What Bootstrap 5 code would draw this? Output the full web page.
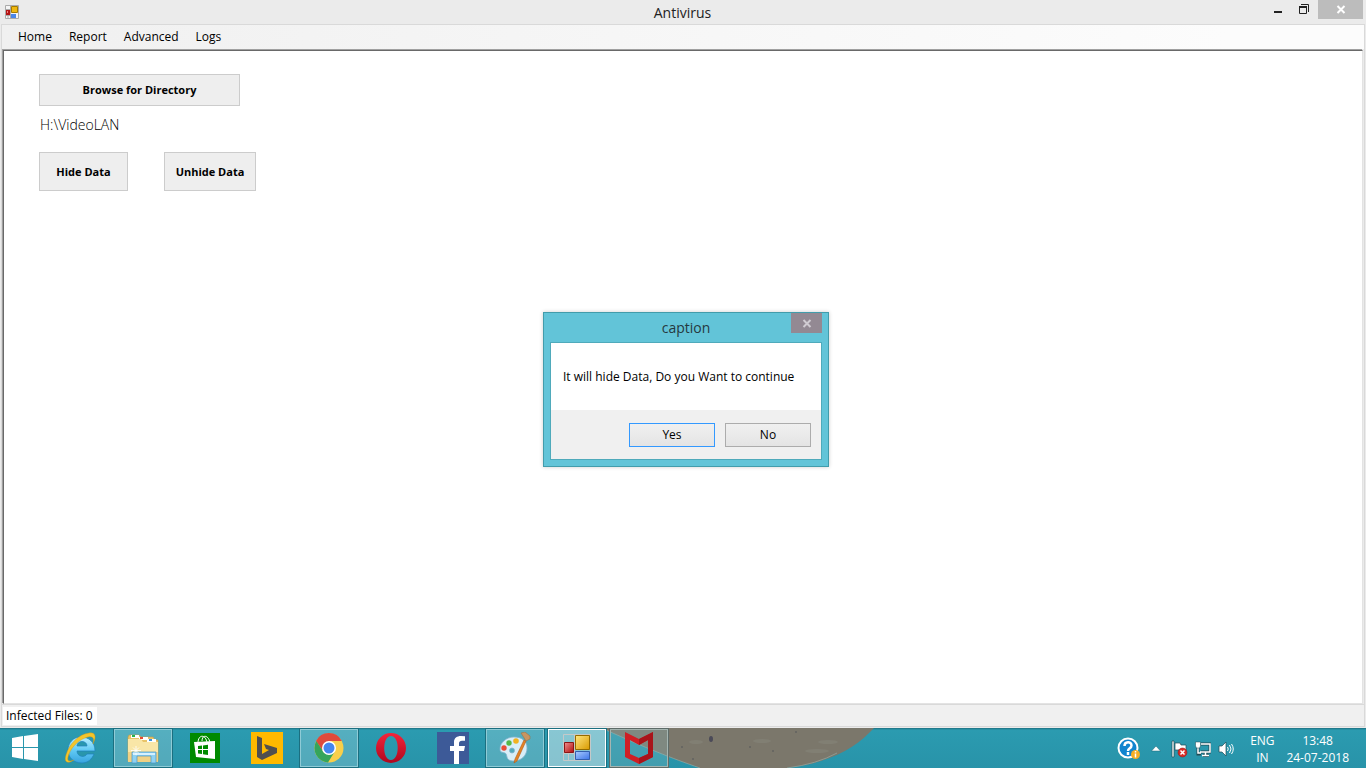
<!DOCTYPE html>
<html lang="en">
<head>
<meta charset="utf-8">
<meta name="viewport" content="width=device-width, initial-scale=1">
<title>Antivirus</title>
<link href="https://cdn.jsdelivr.net/npm/bootstrap@5.3.0/dist/css/bootstrap.min.css" rel="stylesheet">
<style>
  body { font-family: "Open Sans", "Noto Sans", sans-serif; font-size: 12px; line-height: 16px; color: #000; background: #ebebeb; overflow: hidden; }
  svg { display: block; flex: none; }
  button { font-family: inherit; }
  .win-title { height: 24px; color: #222; padding-left: 5px; }
  .win-title h1 { font-size: 14px; line-height: 24px; font-weight: 400; padding-right: 20px; padding-top: 1px; }
  .win-controls { right: 3px; top: 0; }
  .win-btn { width: 27px; height: 19px; border: 0; padding: 0; background: transparent; color: #222; }
  .close-btn { width: 45px; background: #bcbcbc; color: #fff; }
  .frame { border: 1px solid #d9d9d9; margin: 0 1px 1px; }
  .menu-strip { height: 24px; background: linear-gradient(90deg, #f0f0f0, #fcfcfc 90%); padding-left: 7px; }
  .menu-strip .nav-link { color: #000; padding: 4px 8px 4px 9px; line-height: 16px; }
  .client { background: #fff; margin: 1px 1px 0; border: 1px solid #e3e3e3; border-top-color: #696969; border-left-color: #696969; padding: 23px 35px; box-shadow: -1px -1px #a0a0a0; }
  .flat-btn { background: #eee; border: 1px solid #ccc; border-radius: 0; font-size: 11px; font-weight: 700; line-height: 16px; color: #000; padding: 0; }
  .browse-btn { width: 201px; height: 32px; }
  .data-btn { width: 89px; height: 39px; }
  .data-btn.wide { width: 92px; }
  .gap-btns { gap: 36px; }
  .path-line { font-size: 14px; line-height: 18px; font-weight: 300; margin: 10px 0 18px 1px; color: #000; }
  .status-strip { height: 22px; background: #f0f0f0; border-top: 1px solid #d9d9d9; }
  .status-strip output { background: #fff; padding: 0 4px 0 3px; margin: 2px 0 1px 1px; line-height: 18px; }
  .dialog-box { left: 543px; top: 312px; width: 286px; background: #62c4d8; border: 1px solid #429cab; box-shadow: 0 0 4px #0003; padding: 0 6px 6px; }
  .dialog-box h2 { font-size: 14px; line-height: 29px; font-weight: 400; color: #26393f; margin: 0; }
  .dialog-close { right: 6px; top: 0; width: 31px; height: 20px; border: 0; padding: 0; background: #938993; color: #d0cbd2; }
  .dialog-inner { border: 1px solid #4faabb; background: #fff; }
  .dialog-text { padding: 26px 12px 25px; line-height: 16px; margin: 0; white-space: nowrap; }
  .dialog-foot { background: #f0f0f0; padding: 13px 10px 12px; gap: 10px; }
  .dlg-btn { width: 86px; height: 24px; border: 1px solid #acacac; border-radius: 0; background: linear-gradient(#f0f0f0, #e4e4e4); font-size: 12px; line-height: 16px; padding: 0; color: #000; }
  .dlg-btn.default { border-color: #3399ff; }
  .taskbar { height: 40px; background: linear-gradient(#1d6f80, #2b9bb0 2px, #2893a9); }
  .wallpaper { left: 606px; top: 0; }
  .start-btn, .task-btn { border: 0; padding: 0; background: transparent; height: 38px; margin: 1px 0; }
  .start-btn { width: 48px; padding-left: 2px; }
  .task-btn { width: 58px; border: 1px solid transparent; }
  .task-btn.open { background: #ffffff33; border-color: #8fcbd6; outline: 1px solid #1b6f80; }
  .task-btn.active { background: #ffffff70; border-color: #fff; }
  .task-btn.gray { background: #8bbcc044; border-color: #a5b5b1; outline-color: #5d6b68; }
  .tray { color: #fff; font-size: 12px; line-height: 17px; padding-right: 17px; padding-top: 4px; }
  .tray-icons { gap: 7px; margin-right: 15px; padding-bottom: 2px; }
  .tray-lang { width: 26px; margin-right: 11px; }
</style>
</head>
<body class="vh-100 d-flex flex-column">

<header class="win-title position-relative d-flex align-items-center">
  <svg width="14" height="14" viewBox="0 0 14 14"><path fill="#f4f4f4" stroke="#aaa" d="M.5.5h13v13H.5zM.5 4.500h5M.5 10.500h5M3 10v4M5.500 1v12"/><path fill="#b31414" d="M1 5h4v5H1z"/><path fill="#f08080" d="M2 6h1v2H2z"/><path fill="#efb810" stroke="#a57b00" d="M6.500 1.500h6v6h-6z"/><path fill="#4b86e8" d="M6 9h5v4H6z"/></svg>
  <h1 class="flex-grow-1 text-center mb-0">Antivirus</h1>
  <div class="win-controls position-absolute d-flex">
    <button class="win-btn" aria-label="Minimize"><svg width="27" height="19"><path fill="#222" d="M10 11h8v2h-8z"/></svg></button>
    <button class="win-btn" aria-label="Restore"><svg width="27" height="19"><path fill="none" stroke="#222" d="M10 4.500h7.500V12"/><path fill="none" stroke="#222" d="M8.500 6.500h7v7h-7z"/><path fill="#222" d="M8 6h8v2H8z"/></svg></button>
    <button class="win-btn close-btn" aria-label="Close"><svg width="45" height="19"><path stroke="#fff" stroke-width="2" d="M19.500 6l7 7M26.500 6l-7 7"/></svg></button>
  </div>
</header>

<div class="frame flex-grow-1 d-flex flex-column">
  <nav class="menu-strip d-flex">
    <ul class="nav">
      <li class="nav-item"><a class="nav-link" href="#">Home</a></li>
      <li class="nav-item"><a class="nav-link" href="#">Report</a></li>
      <li class="nav-item"><a class="nav-link" href="#">Advanced</a></li>
      <li class="nav-item"><a class="nav-link" href="#">Logs</a></li>
    </ul>
  </nav>
  <main class="client flex-grow-1">
    <button class="btn flat-btn browse-btn d-block">Browse for Directory</button>
    <p class="path-line">H:\VideoLAN</p>
    <div class="d-flex gap-btns">
      <button class="btn flat-btn data-btn">Hide Data</button>
      <button class="btn flat-btn data-btn wide">Unhide Data</button>
    </div>
  </main>
  <footer class="status-strip d-flex"><output>Infected Files: 0</output></footer>
</div>

<section class="dialog-box position-absolute" role="dialog" aria-labelledby="dlgTitle">
  <h2 id="dlgTitle" class="text-center">caption</h2>
  <button class="dialog-close position-absolute" aria-label="Close"><svg width="31" height="20"><path stroke="currentColor" stroke-width="2" d="M12.500 7l7 7M19.500 7l-7 7"/></svg></button>
  <div class="dialog-inner">
    <p class="dialog-text">It will hide Data, Do you Want to continue</p>
    <div class="dialog-foot d-flex justify-content-end">
      <button class="btn dlg-btn default">Yes</button>
      <button class="btn dlg-btn">No</button>
    </div>
  </div>
</section>

<div class="taskbar position-relative d-flex flex-shrink-0">
  <svg class="wallpaper position-absolute" width="270" height="40" viewBox="0 0 270 40">
    <path fill="#7b776b" d="M0 0h268C255 14 240 25 215 33q-15 5-34 7H94C65 30 40 20 0 2z"/>
    <path fill="none" stroke="#9ab0aa" stroke-opacity=".6" d="M0 2C40 20 65 30 94 40M181 40q30-4 50-15"/>
    <g fill="#62625f"><ellipse cx="105" cy="11" rx="2" ry="3" fill="#4b4a58"/><circle cx="190" cy="4" r="1"/><circle cx="76" cy="19" r="1"/><circle cx="144" cy="19" r="1"/><circle cx="167" cy="23" r="1"/><circle cx="87" cy="31" r="1"/></g>
    <g fill="#8d8e84" opacity=".35"><ellipse cx="156" cy="13" rx="9" ry="2"/><ellipse cx="222" cy="14" rx="10" ry="2"/><ellipse cx="90" cy="14" rx="7" ry="2"/><ellipse cx="211" cy="23" rx="12" ry="2"/></g>
  </svg>
  <div class="d-flex gap-1 position-relative">
    <button class="start-btn d-flex align-items-center justify-content-center" aria-label="Start"><svg width="28" height="28" viewBox="0 0 28 28"><path fill="#fff" d="M1 4l11-2v11H1zM13 2l14-2v13H13zM1 14h11v11L1 23zM13 14h14v13l-14-2z"/></svg></button>
    <button class="task-btn d-flex align-items-center justify-content-center" aria-label="Internet Explorer"><svg width="32" height="32" viewBox="0 0 32 32"><defs><linearGradient id="ie" x2="0" y2="1"><stop stop-color="#b9f0ff"/><stop offset=".5" stop-color="#62cbf5"/><stop offset="1" stop-color="#36a3df"/></linearGradient></defs><path fill="url(#ie)" stroke="#1f83bd" stroke-width=".7" fill-rule="evenodd" d="M30 19H12c0 6 8 7 10 3h7c-2 5-6 9-12 9C8 31 3 25 3 18S8 5 16 5s14 5 14 14zM12 14h10c0-6-10-6-10 0z"/><path fill="#f4c52b" stroke="#c99414" stroke-width=".4" d="M28 12C30 5 27 3 20 6 12 9 5 17 3 25c-1 4 1 5 6 3-8 5-10 1-8-5C4 12 14 2 24 1c6-1 8 3 4 11z"/></svg></button>
    <button class="task-btn open d-flex align-items-center justify-content-center" aria-label="File Explorer"><svg width="34" height="32" viewBox="0 0 34 32"><path fill="#e9c468" stroke="#c89c41" stroke-width=".6" d="M3 3h10l2 2h12l2 3h3v21H2V5z"/><path fill="#fff" d="M5 3h8v3H5zM13 5h9v3h-9zM21 7h9v3h-9z"/><path fill="#25b34b" d="M6 3h3v2H6z"/><path fill="#e64932" d="M14 5h3v2h-3z"/><path fill="#3b94e0" d="M23 7h3v2h-3z"/><path fill="#f9e6a7" d="M2 7h13l2 3h15v20H2z"/><path fill="#f0d184" d="M2 20h30v10H2z"/><path fill="#8fd2f2" stroke="#4795c4" stroke-width=".7" d="M6 20h24v11h-5v-7H11v7H6z"/><path fill="#d5f1ff" d="M7 21h22v2H7z"/><path stroke="#fff" stroke-opacity=".8" d="M10 14v9M5 18.500h10M7 15.500l6 6M13 15.500l-6 6"/></svg></button>
    <button class="task-btn d-flex align-items-center justify-content-center" aria-label="Store"><svg width="30" height="30" viewBox="0 0 30 30"><path fill="#008a00" d="M0 0h30v30H0z"/><path fill="none" stroke="#fff" d="M8 10c0-9 8-9 9 0M12 8c0-7 7-6 8 2"/><path fill="#fff" d="M4 9l21-1v18L6 24z"/><path fill="#008a00" d="M8 13l4-.5V16H8zM13 12.400l5-.6V16h-5zM8 17h4v4l-4-.4zM13 17h5v5l-5-.7z"/></svg></button>
    <button class="task-btn d-flex align-items-center justify-content-center" aria-label="Bing"><svg width="32" height="32" viewBox="0 0 32 32"><path fill="#ffb900" d="M0 0h32v32H0z"/><path fill="#514f4f" d="M6 4l5 2v16l7-4-3-1-2-5 13 4v5L11 28l-5-3z"/></svg></button>
    <button class="task-btn open d-flex align-items-center justify-content-center" aria-label="Chrome"><svg width="30" height="30" viewBox="0 0 30 30"><circle cx="15" cy="15" r="14.500" fill="#f9cf4a"/><path fill="#df4a3b" d="M2 8a14.500 14.500 0 0 1 25.800 0H15l-6 10z"/><path fill="#35a55b" d="M2.300 8A14.500 14.500 0 0 0 14 29.500L20.500 19l-10.600.5z"/><circle cx="15" cy="15" r="7" fill="#fff"/><circle cx="15" cy="15" r="5.500" fill="#4486ee"/></svg></button>
    <button class="task-btn d-flex align-items-center justify-content-center" aria-label="Opera"><svg width="30" height="30" viewBox="0 0 30 30"><defs><linearGradient id="op" x2="0" y2="1"><stop stop-color="#f3243a"/><stop offset="1" stop-color="#ad0820"/></linearGradient></defs><path fill="url(#op)" fill-rule="evenodd" d="M15 0a15 15 0 1 0 0 30a15 15 0 1 0 0-30zM15 3c9 0 9 24 0 24S6 3 15 3z"/></svg></button>
    <button class="task-btn d-flex align-items-center justify-content-center" aria-label="Facebook"><svg width="32" height="32" viewBox="0 0 32 32"><path fill="#3d5a98" d="M0 0h32v32H0z"/><path fill="#fff" d="M17 32V19h-4v-5h4v-4c0-4 3-6 7-6l4 .3v4.500h-3c-2 0-3 1-3 2.600V14h6l-1 5h-5v13z"/></svg></button>
    <button class="task-btn open d-flex align-items-center justify-content-center" aria-label="Paint"><svg width="32" height="32" viewBox="0 0 32 32"><path fill="#d8eef8" stroke="#85b4cd" stroke-width=".8" fill-rule="evenodd" d="M15 5C7 5 1 11 1 17c0 4 3 3 5 4 3 1 0 8 8 8 9 0 14-6 14-13S23 5 15 5zm-2 11a2.500 2.500 0 1 1 0 5 2.500 2.500 0 0 1 0-5z"/><circle cx="5" cy="16" r="2.700" fill="#e94c36"/><circle cx="10" cy="11" r="2.700" fill="#54b848"/><circle cx="17" cy="9" r="2.800" fill="#f2b321"/><path fill="#e48325" stroke="#b45b16" stroke-width=".6" d="M25 8l2 1-9 20-3 2 1-4z"/><path fill="#c89562" stroke="#9c6c3b" stroke-width=".5" d="M22 1l4-1 5 4 0 3-4 2z"/></svg></button>
    <button class="task-btn open active d-flex align-items-center justify-content-center" aria-label="Antivirus"><svg width="28" height="28" viewBox="0 0 28 28"><defs><linearGradient id="yy" x2="1" y2="1"><stop stop-color="#ffe680"/><stop offset="1" stop-color="#d99a00"/></linearGradient><linearGradient id="rr" x2="1" y2="1"><stop stop-color="#f09090"/><stop offset="1" stop-color="#b00c0c"/></linearGradient><linearGradient id="bb" x2="1" y2="1"><stop stop-color="#a9cbff"/><stop offset="1" stop-color="#3d75e8"/></linearGradient></defs><path fill="none" stroke="#c4c9c9" d="M.5.500h27v26H.5zM11.500 0v27M0 19.500h12M5.500 20v7"/><path fill="url(#rr)" stroke="#8d1515" d="M1.500 8.500h9v10h-9z"/><path fill="url(#yy)" stroke="#946c00" d="M12.500 1.500h14v14h-14z"/><path fill="url(#bb)" stroke="#335fae" d="M12.500 17.500h14v8h-14z"/></svg></button>
    <button class="task-btn open gray d-flex align-items-center justify-content-center" aria-label="McAfee"><svg width="28" height="32" viewBox="0 0 28 32"><path fill="#cf1f25" fill-rule="evenodd" d="M0 0l14 7 14-7v25l-14 7-14-7zM5 8v14l9 4 9-4V8l-9 5z"/><path fill="#a9141a" d="M14 7l14-7v25l-14 7v-6l9-4V8l-9 5z"/></svg></button>
  </div>

  <div class="tray ms-auto position-relative d-flex">
    <div class="tray-icons d-flex align-items-center">
      <svg width="24" height="24" viewBox="0 0 24 24" aria-label="Help"><circle cx="11" cy="11" r="9.500" fill="#1185cf" stroke="#fff" stroke-width="2"/><path fill="none" stroke="#fff" stroke-width="2.500" d="M7.500 9c0-5 7-5 7-.5 0 3-3.500 2.500-3.500 5.500M11 15v3"/><circle cx="18.500" cy="17.500" r="4.500" fill="#f5ae25"/><path stroke="#fff" stroke-width="1.500" d="M18.500 14v1.500M18.500 16.500v4"/></svg>
      <svg width="16" height="16" viewBox="0 0 16 16" aria-label="Show hidden icons"><path fill="#fff" stroke="#1d6575" stroke-width=".5" d="M8 5l4.500 5h-9z"/></svg>
      <svg width="17" height="18" viewBox="0 0 17 18" aria-label="Action Center"><path fill="#fff" stroke="#204b55" stroke-width=".7" d="M1 1h2v16H1zM4 3h5l1 2h5v7H9L8 10H4z"/><circle cx="11.500" cy="12.500" r="4.500" fill="#d92c27" stroke="#8c1714" stroke-width=".5"/><path stroke="#fff" stroke-width="1.500" d="M9.500 10.500l4 4M13.500 10.500l-4 4"/></svg>
      <svg width="16" height="16" viewBox="0 0 16 16" aria-label="Network"><path fill="none" stroke="#204b55" stroke-width="3" d="M6 3h9v8H6M8 14.500h6M11 11v4M3 7v6h3"/><path fill="none" stroke="#fff" stroke-width="1.500" d="M6 3h9v8H5M7 14.500h7M10.500 11v4M3 6v6h3"/><path fill="#fff" stroke="#204b55" stroke-width=".5" d="M.5 1h5v4l-1 2h-3l-1-2z"/></svg>
      <svg width="16" height="16" viewBox="0 0 16 16" aria-label="Volume"><path fill="#fff" stroke="#204b55" stroke-width=".7" d="M1 5h3l4-4v14l-4-4H1z"/><path fill="none" stroke="#fff" d="M9.500 6q1.500 2 0 4M11.500 4q3 4 0 8M13.500 3q3.500 5 0 10"/></svg>
    </div>
    <div class="tray-lang text-center"><div>ENG</div><div>IN</div></div>
    <time class="text-center" datetime="2018-07-24T13:48"><span class="d-block">13:48</span><span class="d-block">24-07-2018</span></time>
  </div>
</div>
<script src="https://cdn.jsdelivr.net/npm/bootstrap@5.3.0/dist/js/bootstrap.bundle.min.js"></script>
</body>
</html>
